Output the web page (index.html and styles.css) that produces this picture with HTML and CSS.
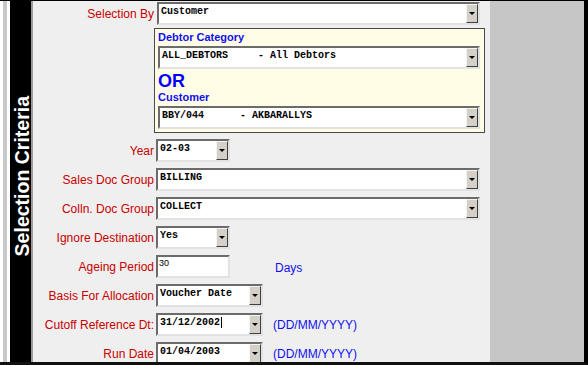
FILE: index.html
```html
<!DOCTYPE html>
<html lang="en">
<head>
    <meta charset="UTF-8">
    <title>Selection Criteria</title>
    <link rel="stylesheet" href="styles.css">
</head>
<body>
    <div class="window">
        <div class="edge"></div>
        <div class="band"><span>Selection Criteria</span></div>

        <div class="form">
            <label class="lbl">Selection By</label>
            <div class="combo wide first"><span class="val">Customer</span><span class="btn"></span></div>

            <div class="panel">
                <div class="ptitle">Debtor Category</div>
                <div class="combo inner"><span class="val">ALL_DEBTORS     - All Debtors</span><span class="btn"></span></div>
                <div class="or">OR</div>
                <div class="ptitle cust">Customer</div>
                <div class="combo inner"><span class="val">BBY/044      - AKBARALLYS</span><span class="btn"></span></div>
            </div>

            <label class="lbl">Year</label>
            <div class="combo small"><span class="val">02-03</span><span class="btn"></span></div>

            <label class="lbl">Sales Doc Group</label>
            <div class="combo wide"><span class="val">BILLING</span><span class="btn"></span></div>

            <label class="lbl">Colln. Doc Group</label>
            <div class="combo wide"><span class="val">COLLECT</span><span class="btn"></span></div>

            <label class="lbl">Ignore Destination</label>
            <div class="combo small"><span class="val">Yes</span><span class="btn"></span></div>

            <label class="lbl">Ageing Period</label>
            <div class="field">
                <div class="combo small text"><span class="num">30</span></div>
                <span class="note days">Days</span>
            </div>

            <label class="lbl">Basis For Allocation</label>
            <div class="combo mid"><span class="val">Voucher Date</span><span class="btn"></span></div>

            <label class="lbl">Cutoff Reference Dt:</label>
            <div class="field">
                <div class="combo mid"><span class="val"><span class="caret">31/12/2002</span></span><span class="btn"></span></div>
                <span class="note">(DD/MM/YYYY)</span>
            </div>

            <label class="lbl">Run Date</label>
            <div class="field">
                <div class="combo mid"><span class="val">01/04/2003</span><span class="btn"></span></div>
                <span class="note">(DD/MM/YYYY)</span>
            </div>
        </div>

        <div class="side"></div>
    </div>
</body>
</html>
```

FILE: styles.css
```css
body{
    margin: 0;
    background-color: #fff;
    font-family: "Liberation Sans", Arial, sans-serif;
}

.window{
    display: flex;
    width: 588px;
    height: 365px;
    box-sizing: border-box;
    border-top: 1px solid #000;
    border-right: 4px solid #000;
    border-bottom: 3px solid #111;
    background-color: #fff;
}

.edge{
    width: 4px;
    flex-shrink: 0;
    margin: 0 3px;
    background-color: #c8c8c8;
}

.band{
    width: 23px;
    flex-shrink: 0;
    background-color: #000;
    border-right: 2px solid #9c9c9c;
    display: flex;
    flex-direction: column;
    justify-content: center;
    align-items: center;
    padding-bottom: 10px;
    box-sizing: border-box;
}

.band span{
    writing-mode: vertical-rl;
    transform: rotate(180deg);
    color: #fff;
    font-size: 19.5px;
    font-weight: 700;
    line-height: 20px;
    white-space: nowrap;
    margin-left: 2px;
}

.form{
    width: 457px;
    flex-shrink: 0;
    background-color: #efefef;
    padding-top: 1px;
    box-sizing: border-box;
    overflow: hidden;
    display: grid;
    grid-template-columns: 121px 1fr;
    column-gap: 2px;
    row-gap: 6px;
    align-items: center;
    align-content: start;
}

.lbl{
    text-align: right;
    color: #c80000;
    font-size: 12px;
    line-height: 14px;
    white-space: nowrap;
    padding-top: 1px;
}

.side{
    flex: 1;
    background-color: #c6c6c6;
}

/* combo boxes */
.combo{
    display: flex;
    height: 23px;
    box-sizing: border-box;
    border: 2px solid;
    border-color: #6b6b6b #e2e2e2 #e2e2e2 #6b6b6b;
    background-color: #fff;
}

.combo .val{
    flex: 1;
    padding: 2px 0 0 2px;
    font-family: "Liberation Mono", "Courier New", monospace;
    font-weight: 700;
    font-size: 10px;
    line-height: 12px;
    white-space: pre;
    color: #000;
    overflow: hidden;
}

.combo .btn{
    width: 12px;
    box-sizing: border-box;
    background-color: #d4d0c8;
    border: 1px solid;
    border-color: #f4f4f4 #404040 #404040 #f4f4f4;
    display: flex;
    justify-content: center;
    align-items: center;
}

.combo .btn::after{
    content: "";
    border-left: 3px solid transparent;
    border-right: 3px solid transparent;
    border-top: 3px solid #000;
}

.wide{ width: 324px; }
.first{ width: 323px; margin-left: 1px; }
.small{ width: 74px; }
.mid{ width: 107px; }

.text .num{
    font-size: 9px;
    line-height: 10px;
    padding: 1px 0 0 1px;
    color: #000;
}

.caret{
    border-right: 1px solid #000;
    padding-right: 1px;
}

.field{
    display: flex;
    align-items: center;
}

.note{
    margin-left: 10px;
    color: #1010ee;
    font-size: 12px;
    padding-top: 1px;
}

.note.days{
    margin-left: 45px;
    padding-top: 2px;
}

/* yellow panel */
.panel{
    grid-column: 2;
    margin-left: -2px;
    margin-top: -3px;
    width: 331px;
    height: 105px;
    box-sizing: border-box;
    border: 1px solid #4a4a4a;
    background-color: #fffde6;
    padding: 1px 4px 0 3px;
}

.ptitle{
    color: #1010ee;
    font-size: 11px;
    font-weight: 700;
    line-height: 14px;
}

.panel .combo{
    width: 322px;
    margin-top: 2px;
}

.or{
    margin-top: 2px;
    color: #0000ff;
    font-size: 18px;
    font-weight: 700;
    line-height: 20px;
}

.cust{
    margin-top: -1px;
}
```
